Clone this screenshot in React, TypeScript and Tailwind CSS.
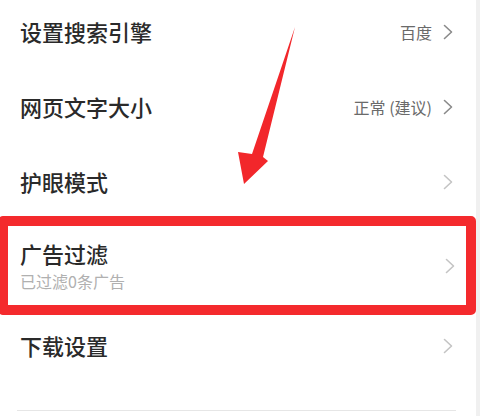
import React from "react"

const font = { fontFamily: '"Noto Sans CJK SC", "Noto Sans", sans-serif' }

const Chevron = ({ dark }: { dark?: boolean }) => (
    <svg width="10" height="16" viewBox="0 0 10 16" className="flex-shrink-0">
        <polyline
            points="1.5,1.5 8.5,8 1.5,14.5"
            fill="none"
            stroke={dark ? "#8a8a8a" : "#c4c4c4"}
            strokeWidth="1.6"
            strokeLinecap="round"
            strokeLinejoin="round"
        />
    </svg>
)

type RowProps = {
    title: string
    value?: string
    sub?: string
    className?: string
}

const Row = ({ title, value, sub, className }: RowProps) => (
    <div className={`flex items-center justify-between ${className ?? ""}`}>
        <div className="flex flex-col -mt-[4px]">
            <span className="text-[22px] leading-[32px] font-medium text-[#2a2a2a]">{title}</span>
            {sub && <span className="text-[16px] leading-[24px] text-[#b0b0b0]">{sub}</span>}
        </div>
        <div className="flex items-center gap-[11px] -mt-[2px]">
            {value && <span className="text-[16px] text-[#6a6a6a]">{value}</span>}
            <Chevron dark={!!value} />
        </div>
    </div>
)

export default function App() {
    return (
        <div className="relative w-[480px] h-[416px] bg-white overflow-hidden flex" style={font}>
            <div className="w-[476px] flex flex-col">
                <Row title="设置搜索引擎" value="百度" className="h-[66px] pl-5 pr-[23px]" />
                <Row title="网页文字大小" value="正常 (建议)" className="h-[84px] pl-5 pr-[23px]" />
                <Row title="护眼模式" className="h-[66px] pl-5 pr-[23px]" />
                <div className="h-[99px] -ml-[2px] w-[478px] border-[10px] border-[#f42a2d] rounded-[5px] flex flex-col justify-center">
                    <Row title="广告过滤" sub="已过滤0条广告" className="pl-[12px] pr-[11px] pt-[2px]" />
                </div>
                <Row title="下载设置" className="h-[64px] pl-5 pr-[23px]" />
                <div className="mt-[31px] ml-[17px] w-[439px] h-px bg-[#e6e6e6]" />
            </div>
            <div className="w-[4px] h-full bg-[#f0f0f0]" />

            <svg className="absolute left-0 top-0" width="480" height="416" viewBox="0 0 480 416">
                <polygon
                    points="295,27 263,157 268,161 244,184 238,152 252,154"
                    fill="#f2272b"
                />
            </svg>
        </div>
    )
}
